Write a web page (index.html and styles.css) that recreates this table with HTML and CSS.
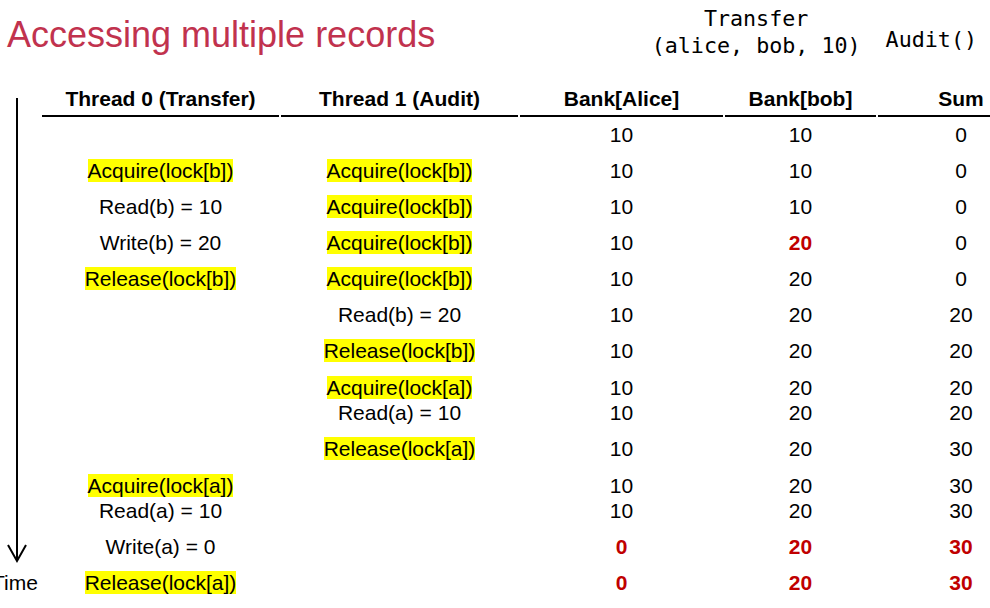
FILE: index.html
```html
<!DOCTYPE html>
<html lang="en">
<head>
<meta charset="utf-8">
<title>Accessing multiple records</title>
<link rel="stylesheet" href="styles.css">
</head>
<body>
<div class="slide">
  <header class="top">
    <h1 class="title">Accessing multiple records</h1>
    <div class="code code-transfer">Transfer<br>(alice, bob, 10)</div>
    <div class="code code-audit">Audit()</div>
  </header>
  <div class="main">
    <div class="gutter">
      <svg class="arrow" width="34" height="466" viewBox="0 0 34 466">
        <line x1="17" y1="0" x2="17" y2="462" stroke="#000" stroke-width="2"/>
        <polyline points="8,447 17,463 26,447" fill="none" stroke="#000" stroke-width="2"/>
      </svg>
      <div class="time">Time</div>
    </div>
    <div class="table">
      <div class="th">Thread 0 (Transfer)</div>
      <div class="th">Thread 1 (Audit)</div>
      <div class="th">Bank[Alice]</div>
      <div class="th">Bank[bob]</div>
      <div class="th">Sum</div>

      <div class="td"></div><div class="td"></div><div class="td">10</div><div class="td">10</div><div class="td">0</div>

      <div class="td"><span class="hl">Acquire(lock[b])</span></div><div class="td"><span class="hl">Acquire(lock[b])</span></div><div class="td">10</div><div class="td">10</div><div class="td">0</div>

      <div class="td">Read(b) = 10</div><div class="td"><span class="hl">Acquire(lock[b])</span></div><div class="td">10</div><div class="td">10</div><div class="td">0</div>

      <div class="td">Write(b) = 20</div><div class="td"><span class="hl">Acquire(lock[b])</span></div><div class="td">10</div><div class="td red">20</div><div class="td">0</div>

      <div class="td"><span class="hl">Release(lock[b])</span></div><div class="td"><span class="hl">Acquire(lock[b])</span></div><div class="td">10</div><div class="td">20</div><div class="td">0</div>

      <div class="td"></div><div class="td">Read(b) = 20</div><div class="td">10</div><div class="td">20</div><div class="td">20</div>

      <div class="td"></div><div class="td"><span class="hl">Release(lock[b])</span></div><div class="td">10</div><div class="td">20</div><div class="td">20</div>

      <div class="td pair"></div><div class="td pair"><span class="hl">Acquire(lock[a])</span><br>Read(a) = 10</div><div class="td pair">10<br>10</div><div class="td pair">20<br>20</div><div class="td pair">20<br>20</div>

      <div class="td"></div><div class="td"><span class="hl">Release(lock[a])</span></div><div class="td">10</div><div class="td">20</div><div class="td">30</div>

      <div class="td pair"><span class="hl">Acquire(lock[a])</span><br>Read(a) = 10</div><div class="td pair"></div><div class="td pair">10<br>10</div><div class="td pair">20<br>20</div><div class="td pair">30<br>30</div>

      <div class="td">Write(a) = 0</div><div class="td"></div><div class="td red">0</div><div class="td red">20</div><div class="td red">30</div>

      <div class="td"><span class="hl">Release(lock[a])</span></div><div class="td"></div><div class="td red">0</div><div class="td red">20</div><div class="td red">30</div>
    </div>
  </div>
</div>
</body>
</html>
```

FILE: styles.css
```css
html, body {
  margin: 0;
  padding: 0;
  background: #fff;
  overflow: hidden;
}

body {
  width: 990px;
  height: 608px;
  font-family: "Liberation Sans", Arial, sans-serif;
  color: #000;
}

.slide {
  width: 990px;
  height: 608px;
  overflow: hidden;
}

.top {
  display: flex;
  align-items: flex-start;
  height: 84px;
  padding-right: 13px;
}

.title {
  flex: 1;
  margin: 14px 0 0 7px;
  font-size: 36px;
  font-weight: normal;
  line-height: normal;
  color: #c1324e;
  white-space: nowrap;
}

.code {
  font-family: "DejaVu Sans Mono", "Liberation Mono", monospace;
  font-size: 21.7px;
  line-height: 27px;
  white-space: nowrap;
}

.code-transfer {
  margin-top: 5px;
  text-align: center;
}

.code-audit {
  margin-top: 26px;
  margin-left: 25px;
}

.main {
  display: flex;
  align-items: flex-start;
}

.gutter {
  flex: 0 0 42px;
  display: flex;
  flex-direction: column;
}

.arrow {
  display: block;
  margin-top: 14px;
}

.time {
  margin-top: 7px;
  margin-left: -8px;
  font-size: 21px;
  line-height: 24px;
  white-space: nowrap;
}

.table {
  flex: 0 0 auto;
  display: grid;
  grid-template-columns: 237px 237px 203px 151px 166px;
  column-gap: 2px;
  font-size: 21px;
}

.th {
  padding: 3px 0 4px;
  line-height: 24px;
  font-weight: bold;
  text-align: center;
  border-bottom: 2px solid #000;
  white-space: nowrap;
}

.td {
  height: 36px;
  line-height: 36px;
  text-align: center;
  white-space: nowrap;
}

.td.pair {
  height: 50px;
  padding: 6px 0;
  line-height: 25px;
}

.hl {
  background: #ffff00;
}

.red {
  color: #c00000;
  font-weight: bold;
}
```
